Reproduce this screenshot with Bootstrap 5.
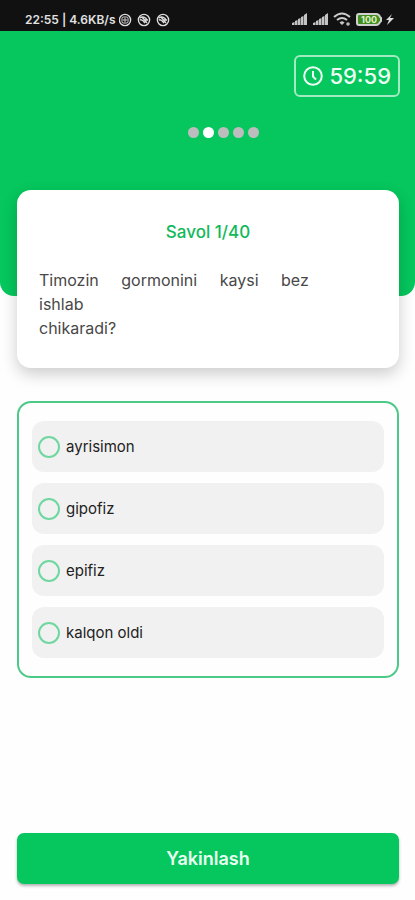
<!DOCTYPE html>
<html lang="uz">
<head>
<meta charset="utf-8">
<meta name="viewport" content="width=device-width, initial-scale=1">
<title>Savol 1/40</title>
<link href="https://cdn.jsdelivr.net/npm/bootstrap@5.3.0/dist/css/bootstrap.min.css" rel="stylesheet">
<style>
  :root { --brand: #05c75d; }
  body { font-family: Inter, "Liberation Sans", sans-serif; background: #fefefe; color: #484848; }
  .statusbar { background: #111; color: #e2e2e2; height: 31px; padding: 8px 21px 0 25px; font-size: 12px; line-height: 23px; font-weight: 600; }
  .statusbar svg { display: block; }
  .hero { background: var(--brand); border-radius: 0 0 14px 14px; padding: 24px 15px 0; height: 265px; }
  .timer { border: 2px solid #a2eac1; border-radius: 6px; height: 42px; padding: 0 7px; color: #effff5; font-size: 22px; line-height: 24px; font-weight: 500; gap: 6px; }
  .dots { gap: 4px; margin-top: 30px; padding-left: 32px; }
  .dot { width: 11px; height: 11px; border-radius: 50%; background: #bdbdbd; }
  .dot-on { background: #fff; }
  .page { padding: 0 16px 16px 17px; margin-top: -106px; }
  .question { background: #fff; border-radius: 14px; padding: 30px 22px 28px; box-shadow: 0 6px 16px rgba(0,0,0,.2); }
  .question h1 { color: #12b95c; font-size: 17px; line-height: 24px; font-weight: 500; margin-bottom: 24px; }
  .question p { font-size: 16px; line-height: 24px; }
  .answers { border: 2px solid #4cc986; border-radius: 14px; margin-top: 33px; padding: 18px 13px; gap: 11px; }
  .answer { background: #f1f1f1; border-radius: 12px; height: 51px; padding: 0 6px; gap: 6px; color: #222; font-size: 15px; line-height: 24px; }
  .answer .form-check-input { width: 22px; height: 22px; border: 2px solid #6fd79f; background-color: transparent; }
  .answer .form-check-input:checked { background-color: var(--brand); }
  .finish, .finish:hover { background: var(--brand); color: #e9fff1; border: 0; border-radius: 7px; height: 51px; font-size: 18px; line-height: 24px; font-weight: 600; box-shadow: 0 2px 3px rgba(0,0,0,.3); }
</style>
<script src="https://cdn.jsdelivr.net/npm/bootstrap@5.3.0/dist/js/bootstrap.bundle.min.js"></script>
</head>
<body class="d-flex flex-column min-vh-100">
<div class="statusbar d-flex justify-content-between">
  <div class="d-flex align-items-center gap-1">
    <span>22:55 | 4.6KB/s</span>
    <svg width="52" height="14" viewBox="0 0 52 14" fill="none" stroke="#ddd" stroke-width="1.4">
      <circle cx="4" cy="7" r="5.600" transform="translate(2)"/><rect x="3" y="4" width="6" height="6" rx="1.500" stroke-width="1"/><circle cx="6" cy="7" r="1.200" stroke-width="1"/>
      <g id="feed"><circle cx="25" cy="7" r="5.600"/><path d="M21 5c2-2 6-1 7 2M21 7c2-1 3 0 5 3M23 4l5 6M25 7l4 0"/></g>
      <use href="#feed" x="19"/>
    </svg>
  </div>
  <svg width="103" height="23" viewBox="0 0 103 23">
    <g id="signal" fill="#c4c4c4"><path d="M1 17v-2l2.500-1v3zM4 17v-4l2.500-1v5zM7 17v-6l2.500-1v7zM10 17V9l2.500-1v9zM13 17V7l3-2v12z"/></g>
    <use href="#signal" x="21"/>
    <g fill="none" stroke="#ccc" stroke-width="2"><path d="M43 9q8-7 16 0M46 12q5-4 10 0"/><path d="M49 14.500q2-1.500 4 0l-2 2z" fill="#ccc" stroke-width="1"/></g>
    <circle cx="57" cy="16" r="1.800" fill="#bbb"/>
    <path d="M68 6h17q3 0 4 3l1 1v3l-1 1q-1 3-4 3H68q-2 0-2-2V8q0-2 2-2z" fill="#428d20" stroke="#d0d0d0" stroke-width="2"/>
    <text x="70" y="15" font-size="9" font-weight="700" fill="#dff3c8">100</text>
    <path d="M101 6l-6 6h3l-2 5 7-7h-4z" fill="#ddd"/>
  </svg>
</div>
<header class="hero">
  <div class="d-flex justify-content-end">
    <div class="timer d-flex align-items-center">
      <svg width="20" height="20" viewBox="0 0 20 20" fill="none" stroke="currentColor" stroke-width="2"><circle cx="10" cy="10" r="8.800"/><path d="M10 5v5.500l3 3"/></svg>
      <time>59:59</time>
    </div>
  </div>
  <div class="dots d-flex justify-content-center">
    <span class="dot"></span><span class="dot dot-on"></span><span class="dot"></span><span class="dot"></span><span class="dot"></span>
  </div>
</header>
<main class="page d-flex flex-column flex-grow-1">
  <section class="question">
    <h1 class="text-center">Savol 1/40</h1>
    <p class="mb-0">Timozin&nbsp;&nbsp;&nbsp;&nbsp; gormonini&nbsp;&nbsp;&nbsp;&nbsp; kaysi&nbsp;&nbsp;&nbsp;&nbsp; bez<br>ishlab<br>chikaradi?</p>
  </section>
  <form class="d-flex flex-column flex-grow-1">
    <div class="answers d-flex flex-column" role="radiogroup" aria-label="Javoblar">
      <label class="answer d-flex align-items-center" for="a1"><input class="form-check-input m-0" type="radio" name="javob" id="a1">ayrisimon</label>
      <label class="answer d-flex align-items-center" for="a2"><input class="form-check-input m-0" type="radio" name="javob" id="a2">gipofiz</label>
      <label class="answer d-flex align-items-center" for="a3"><input class="form-check-input m-0" type="radio" name="javob" id="a3">epifiz</label>
      <label class="answer d-flex align-items-center" for="a4"><input class="form-check-input m-0" type="radio" name="javob" id="a4">kalqon oldi</label>
    </div>
    <button type="button" class="btn finish w-100 mt-auto">Yakinlash</button>
  </form>
</main>
</body>
</html>
